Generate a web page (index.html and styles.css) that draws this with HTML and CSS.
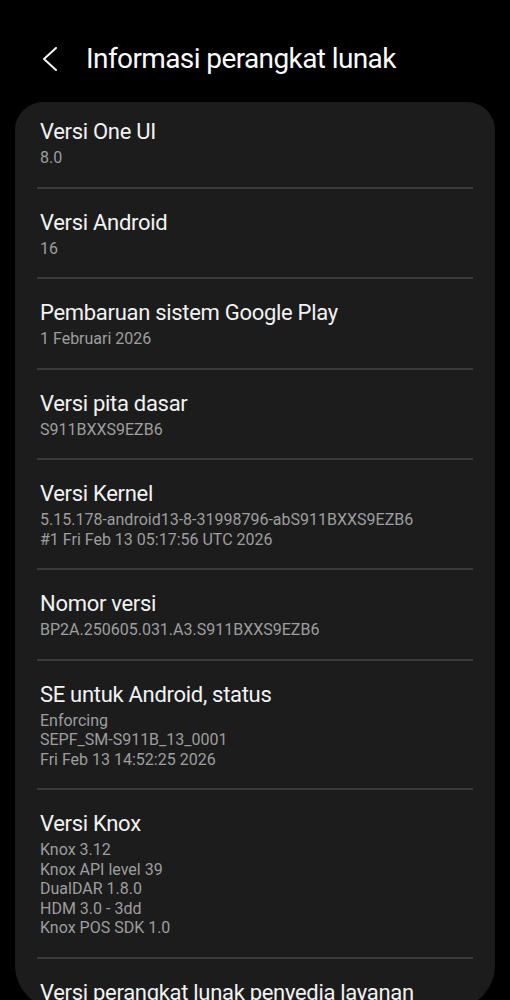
FILE: index.html
```html
<!DOCTYPE html>
<html>
<head>
    <title>Informasi perangkat lunak</title>
    <meta name="viewport" content="width=device-width, initial-scale=1.0">
    <link rel="stylesheet" href="styles.css">
</head>

<body>

<div class="screen">

    <header class="top">
        <svg class="back" width="16" height="24" viewBox="0 0 16 24">
            <path d="M14 1 L2 12 L14 23" fill="none" stroke="#f5f5f5" stroke-width="2" stroke-linecap="round" stroke-linejoin="round"/>
        </svg>
        <h1>Informasi perangkat lunak</h1>
    </header>

    <section class="card">
        <div class="item">
            <h2>Versi One UI</h2>
            <p class="value">8.0</p>
        </div>
        <div class="item">
            <h2>Versi Android</h2>
            <p class="value">16</p>
        </div>
        <div class="item">
            <h2>Pembaruan sistem Google Play</h2>
            <p class="value">1 Februari 2026</p>
        </div>
        <div class="item">
            <h2>Versi pita dasar</h2>
            <p class="value">S911BXXS9EZB6</p>
        </div>
        <div class="item">
            <h2>Versi Kernel</h2>
            <p class="value">5.15.178-android13-8-31998796-abS911BXXS9EZB6<br>#1 Fri Feb 13 05:17:56 UTC 2026</p>
        </div>
        <div class="item">
            <h2>Nomor versi</h2>
            <p class="value">BP2A.250605.031.A3.S911BXXS9EZB6</p>
        </div>
        <div class="item">
            <h2>SE untuk Android, status</h2>
            <p class="value">Enforcing<br>SEPF_SM-S911B_13_0001<br>Fri Feb 13 14:52:25 2026</p>
        </div>
        <div class="item">
            <h2>Versi Knox</h2>
            <p class="value">Knox 3.12<br>Knox API level 39<br>DualDAR 1.8.0<br>HDM 3.0 - 3dd<br>Knox POS SDK 1.0</p>
        </div>
        <div class="item">
            <h2>Versi perangkat lunak penyedia layanan</h2>
        </div>
    </section>

</div>

</body>
</html>
```
FILE: styles.css
```css
html, body {
    margin: 0;
    padding: 0;
    background: #000;
}

body {
    font-family: Roboto, "Noto Sans", sans-serif;
    color: #f2f2f2;
}

.screen {
    height: 1000px;
    overflow: hidden;
}

/* header */

.top {
    display: flex;
    align-items: center;
    gap: 28px;
    padding: 42px 0 26px 42px;
}

.back {
    display: block;
    flex: none;
}

.top h1 {
    margin: 0;
    font-size: 28px;
    font-weight: 400;
    line-height: 34px;
    letter-spacing: -0.6px;
    color: #fafafa;
}

/* card with the list */

.card {
    margin: 0 15px;
    height: 906px;
    padding: 0 22px;
    background: #1c1c1d;
    border-radius: 28px 28px 42px 42px;
    overflow: hidden;
}

.item {
    padding: 20px 3px 19px;
    border-bottom: 2px solid #3a3a3b;
}

.item:first-child {
    padding-top: 16px;
}

.item h2 {
    margin: 0;
    font-size: 22px;
    font-weight: 400;
    line-height: 28px;
    letter-spacing: -0.3px;
    color: #f2f2f2;
}

.value {
    margin: 2px 0 0;
    font-size: 16px;
    line-height: 19.5px;
    color: #9e9e9e;
}
```
